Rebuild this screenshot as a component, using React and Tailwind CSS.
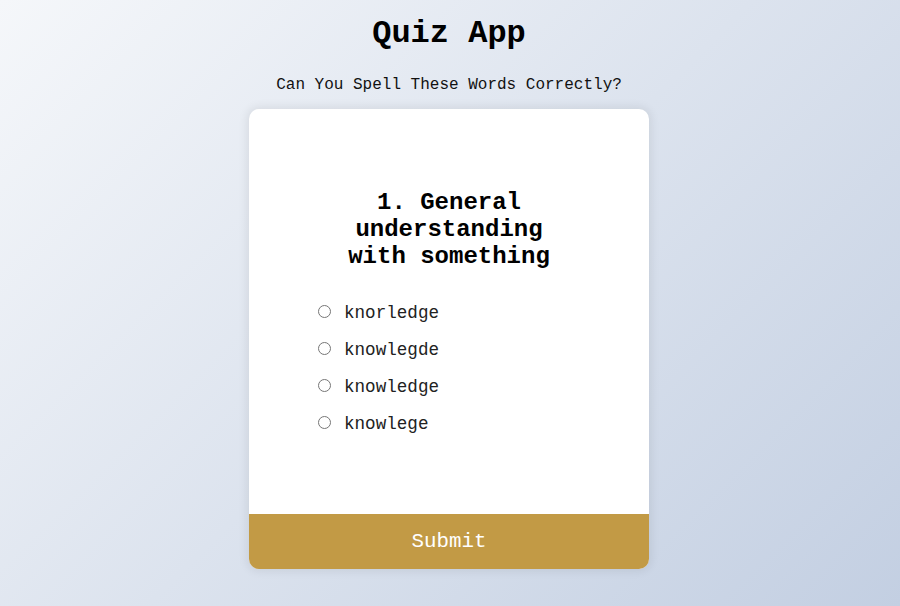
export default function App() {
  const options = ["knorledge", "knowlegde", "knowledge", "knowlege"];
  return (
    <div className="min-h-[606px] w-full pr-[2px] bg-[linear-gradient(135deg,#f5f7fa_0%,#c3cfe2_100%)] font-['Liberation_Mono','Courier_New',monospace] flex flex-col items-center">
      <h1 className="mt-[16px] text-[32px] leading-[36px] font-bold text-black">Quiz App</h1>
      <p className="mt-[24px] text-[16px] leading-[18px] text-[#111]">Can You Spell These Words Correctly?</p>
      <div className="mt-[15px] w-[400px] h-[460px] bg-white rounded-[10px] shadow-[0_0_10px_2px_rgba(0,0,0,0.08)] overflow-hidden flex flex-col">
        <div className="flex-1 pt-[80px]">
          <h2 className="w-[240px] mx-auto text-center text-[24px] leading-[27px] font-bold text-black">
            1. General understanding with something
          </h2>
          <ul className="mt-[23px] pl-[64px]">
            {options.map((o, i) => (
              <li key={o} className="h-[37px] flex items-center">
                <label className="flex items-center text-[17.6px] leading-[20px] text-[#222]">
                  <input type="radio" name="q" id={`o${i}`} className="w-[13px] h-[13px] m-0 mr-[13px] ml-[5px]" />
                  <span className="mt-[2px]">{o}</span>
                </label>
              </li>
            ))}
          </ul>
        </div>
        <button className="h-[55px] w-full bg-[#c29a45] text-white text-[20.8px] font-['Liberation_Mono','Courier_New',monospace]">
          Submit
        </button>
      </div>
    </div>
  );
}
